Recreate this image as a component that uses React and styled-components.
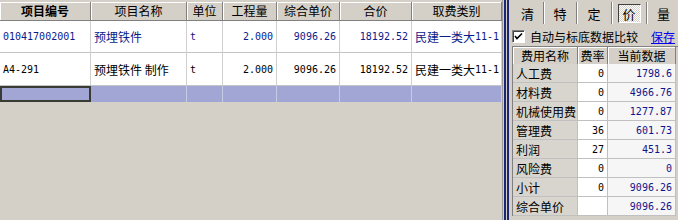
import React from 'react';
import styled, { createGlobalStyle } from 'styled-components';

const Global = createGlobalStyle`
    html, body {
        margin: 0;
        padding: 0;
        background: #d4d0c8;
    }
    body {
        font-family: "Noto Sans CJK SC", "DejaVu Sans", sans-serif;
        font-size: 12px;
        color: #000;
    }
`

const Frame = styled.div`
    width: 678px;
    height: 220px;
    display: flex;
    overflow: hidden;
    background: #d4d0c8;
`

const LeftPane = styled.div`
    width: 502px;
    flex: 0 0 502px;
    padding-top: 2px;
    box-sizing: border-box;
`

const cols = '91px 96px 36px 54px 63px 72px 90px';

const Row = styled.div`
    display: grid;
    grid-template-columns: ${cols};
    height: ${p => p.h}px;
`

const HeadCell = styled.div`
    display: flex;
    align-items: center;
    justify-content: center;
    background: #d4d0c8;
    border-right: 1px solid #808080;
    border-bottom: 1px solid #808080;
    box-shadow: inset 1px 1px 0 #fff;
    font-weight: ${p => (p.bold ? 700 : 400)};
    line-height: 1;
    box-sizing: border-box;
`

const Cell = styled.div`
    display: flex;
    align-items: center;
    justify-content: ${p => (p.right ? 'flex-end' : 'flex-start')};
    padding: 0 3px;
    background: #fff;
    border-right: 1px solid #d0d0d0;
    border-bottom: 1px solid #c4c4c4;
    color: ${p => (p.blue ? '#0c1a8a' : '#000')};
    white-space: nowrap;
    overflow: hidden;
    box-sizing: border-box;
`

const SelCell = styled.div`
    background: #a1a6d5;
    box-sizing: border-box;
    border: ${p => (p.focus ? '2px solid #3a3a34' : 'none')};
    border-right: ${p => (p.focus ? '2px solid #3a3a34' : '1px solid #c8cbe6')};
`

const Mono = styled.span`
    font-family: "DejaVu Sans Mono", "Liberation Mono", monospace;
    font-size: 10px;
`

const Splitter = styled.div`
    flex: 0 0 8px;
    box-sizing: border-box;
    border-left: 1px solid #9a9a9a;
    display: flex;
    gap: 1px;
    padding-left: 1px;
    span {
        width: 2px;
        background: #1c2672;
    }
`

const RightPane = styled.div`
    flex: 1;
    min-width: 0;
    display: flex;
    flex-direction: column;
    padding-left: 2px;
    overflow: hidden;
`

const Tabs = styled.div`
    display: flex;
    height: 26px;
    align-items: center;
`

const Tab = styled.div`
    flex: 0 0 ${p => p.w}px;
    height: 22px;
    display: flex;
    align-items: center;
    justify-content: center;
    font-size: 13px;
    border-right: 1px solid #808080;
    box-shadow: 1px 0 0 #fff;
    box-sizing: border-box;
`

const Pressed = styled.div`
    width: 23px;
    height: 19px;
    display: flex;
    align-items: center;
    justify-content: center;
    box-sizing: border-box;
    border: 1px solid;
    border-color: #404040 #fff #fff #404040;
    background-color: #ebe9e4;
    background-image: repeating-conic-gradient(#fff 0 25%, #d4d0c8 0 50%);
    background-size: 2px 2px;
`

const CheckRow = styled.div`
    height: 20px;
    display: flex;
    align-items: center;
    white-space: nowrap;
    overflow: hidden;
`

const Box = styled.div`
    width: 13px;
    height: 13px;
    flex: 0 0 13px;
    box-sizing: border-box;
    background: #fff;
    border: 1px solid;
    border-color: #808080 #fff #fff #808080;
    box-shadow: inset 1px 1px 0 #404040;
    margin-right: 5px;
    display: flex;
    align-items: center;
    justify-content: center;
`

const Link = styled.span`
    margin-left: 13px;
    color: #0000ee;
    text-decoration: underline;
`

const FeeRow = styled.div`
    display: grid;
    grid-template-columns: 65px 30px 68px;
    height: ${p => p.h}px;
`

const FeeHead = styled.div`
    display: flex;
    align-items: center;
    justify-content: center;
    border-right: 1px solid #808080;
    border-bottom: 1px solid #808080;
    box-shadow: inset 1px 1px 0 #fff;
    box-sizing: border-box;
`

const FeeCell = styled.div`
    display: flex;
    align-items: center;
    justify-content: ${p => (p.right ? 'flex-end' : 'flex-start')};
    padding: 0 3px;
    background: ${p => p.bg};
    color: ${p => (p.blue ? '#10148c' : '#000')};
    border-right: 1px solid #c0c0c0;
    border-bottom: 1px solid #c0c0c0;
    box-sizing: border-box;
    white-space: nowrap;
    overflow: hidden;
`

const FeeTable = styled.div`
    border-left: 1px solid #808080;
    border-top: 1px solid #808080;
`

const items = [
    {code: '010417002001', name: '预埋铁件', unit: 't', qty: '2.000', price: '9096.26', total: '18192.52', type: '11-1', blue: true},
    {code: 'A4-291', name: '预埋铁件 制作', unit: 't', qty: '2.000', price: '9096.26', total: '18192.52', type: '11-1'},
];

const fees = [
    ['人工费', '0', '1798.6'],
    ['材料费', '0', '4966.76'],
    ['机械使用费', '0', '1277.87'],
    ['管理费', '36', '601.73'],
    ['利润', '27', '451.3'],
    ['风险费', '0', '0'],
    ['小计', '0', '9096.26'],
    ['综合单价', '', '9096.26'],
];

const App = () => {
    return (
        <Frame>
            <Global />
            <LeftPane>
                <Row h={19}>
                    <HeadCell bold>项目编号</HeadCell>
                    <HeadCell>项目名称</HeadCell>
                    <HeadCell>单位</HeadCell>
                    <HeadCell>工程量</HeadCell>
                    <HeadCell>综合单价</HeadCell>
                    <HeadCell>合价</HeadCell>
                    <HeadCell>取费类别</HeadCell>
                </Row>
                {items.map((it, i) => (
                    <Row h={i === 0 ? 32 : 33} key={it.code}>
                        <Cell blue={it.blue}><Mono>{it.code}</Mono></Cell>
                        <Cell blue={it.blue}>{it.name}</Cell>
                        <Cell blue={it.blue}><Mono>{it.unit}</Mono></Cell>
                        <Cell blue={it.blue} right><Mono>{it.qty}</Mono></Cell>
                        <Cell blue={it.blue} right><Mono>{it.price}</Mono></Cell>
                        <Cell blue={it.blue} right><Mono>{it.total}</Mono></Cell>
                        <Cell blue={it.blue}>民建一类大<Mono>{it.type}</Mono></Cell>
                    </Row>
                ))}
                <Row h={16}>
                    <SelCell focus />
                    <SelCell />
                    <SelCell />
                    <SelCell />
                    <SelCell />
                    <SelCell />
                    <SelCell />
                </Row>
            </LeftPane>
            <Splitter><span /><span /></Splitter>
            <RightPane>
                <Tabs>
                    <Tab w={32}>清</Tab>
                    <Tab w={33}>特</Tab>
                    <Tab w={35}>定</Tab>
                    <Tab w={35}><Pressed>价</Pressed></Tab>
                    <Tab w={34}>量</Tab>
                </Tabs>
                <CheckRow>
                    <Box>
                        <svg width="9" height="9" viewBox="0 0 9 9">
                            <path d="M1 4 L3 6.5 L8 1.5" stroke="#000" strokeWidth="1.6" fill="none" />
                        </svg>
                    </Box>
                    自动与标底数据比较
                    <Link>保存</Link>
                </CheckRow>
                <FeeTable>
                    <FeeRow h={17}>
                        <FeeHead>费用名称</FeeHead>
                        <FeeHead>费率</FeeHead>
                        <FeeHead>当前数据</FeeHead>
                    </FeeRow>
                    {fees.map(f => (
                        <FeeRow h={19} key={f[0]}>
                            <FeeCell bg="#d8d5cf">{f[0]}</FeeCell>
                            <FeeCell bg="#fff" right><Mono>{f[1]}</Mono></FeeCell>
                            <FeeCell bg="#f6f6f6" right blue><Mono>{f[2]}</Mono></FeeCell>
                        </FeeRow>
                    ))}
                </FeeTable>
            </RightPane>
        </Frame>
    )
}

export default App;
